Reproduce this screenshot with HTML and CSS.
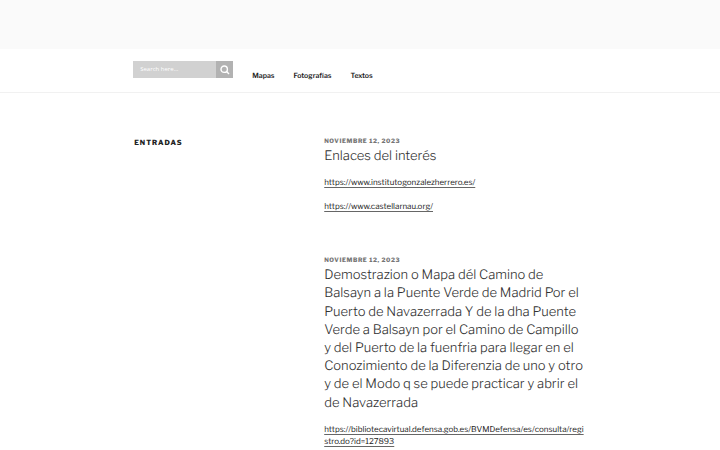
FILE: index.html
```html
<!DOCTYPE html>
<html lang="es">
<head>
<meta charset="utf-8">
<title>Entradas</title>
<meta name="viewport" content="width=device-width, initial-scale=1">
<link rel="stylesheet" href="styles.css">
</head>
<body>
<header class="banner"></header>
<nav class="navigation">
  <div class="wrap nav-row">
    <form class="search" role="search">
      <input class="search-input" type="search" aria-label="Search" placeholder="Search here...">
      <button class="search-button" type="button" aria-label="Search">
        <svg class="search-icon" viewBox="0 0 10 10"><circle cx="4.2" cy="4.2" r="3.2"/><path d="M6.6 6.6 9 9"/></svg>
      </button>
    </form>
    <ul class="menu">
      <li><a href="#mapas">Mapas</a></li>
      <li><a href="#fotografias">Fotografías</a></li>
      <li><a href="#textos">Textos</a></li>
    </ul>
  </div>
</nav>
<div class="wrap content">
  <h2 class="page-title">Entradas</h2>
  <main class="posts">
    <article class="post">
      <time class="date" datetime="2023-11-12">noviembre 12, 2023</time>
      <h3 class="title">Enlaces del interés</h3>
      <p><a href="https://www.institutogonzalezherrero.es/">https://www.institutogonzalezherrero.es/</a></p>
      <p><a href="https://www.castellarnau.org/">https://www.castellarnau.org/</a></p>
    </article>
    <article class="post">
      <time class="date" datetime="2023-11-12">noviembre 12, 2023</time>
      <h3 class="title">Demostrazion o Mapa dél Camino de Balsayn a la Puente Verde de Madrid Por el Puerto de Navazerrada Y de la dha Puente Verde a Balsayn por el Camino de Campillo y del Puerto de la fuenfria para llegar en el Conozimiento de la Diferenzia de uno y otro y de el Modo q se puede practicar y abrir el de Navazerrada</h3>
      <p><a href="https://bibliotecavirtual.defensa.gob.es/BVMDefensa/es/consulta/registro.do?id=127893">https://bibliotecavirtual.defensa.gob.es/BVMDefensa/es/consulta/registro.do?id=127893</a></p>
    </article>
  </main>
</div>
</body>
</html>
```
FILE: styles.css
```css
* { box-sizing: border-box; }
body {
  margin: 0;
  background: #fff;
  color: #333;
  font: 8px/12px "Libre Franklin", "Open Sans", sans-serif;
  text-rendering: geometricPrecision;
}
a { color: #222; }
.banner { height: 49px; background: #fafafa; }
.navigation { border-bottom: 1px solid #f1f1f1; }
.wrap { width: 63%; margin: 0 auto; }
.nav-row { display: flex; align-items: flex-start; padding: 12px 0 10px; }
.search { display: flex; width: 100px; height: 17px; }
.search-input {
  flex: 1; min-width: 0; padding: 0 7px; border: 0; border-radius: 0;
  background: #d1d1d1; color: #fff; font: 6px/17px "Open Sans", sans-serif;
  appearance: none;
}
.search-input::placeholder { color: #fff; opacity: 1; }
.search-button {
  display: grid; place-items: center; width: 17px; padding: 0; border: 0; background: #b2b2b2;
}
.search-icon { width: 10px; height: 10px; fill: none; stroke: #fff; stroke-width: 1.4; }
.menu { display: flex; gap: 19px; margin: 8px 0 0 19px; padding: 0; list-style: none; }
.menu a { font-size: 7px; font-weight: 600; text-decoration: none; }
.content { display: grid; grid-template-columns: 190px 1fr; padding: 44px 2px 0 1px; }
.page-title { margin: 0; color: #222; font-size: 7px; line-height: 12px; font-weight: 800; letter-spacing: 1px; text-transform: uppercase; }
.post { margin-bottom: 44px; }
.post:last-child { margin-bottom: 0; }
.post:last-child p { margin-bottom: 0; }
.date { display: block; color: #767676; font-size: 6px; line-height: 10px; font-weight: 800; letter-spacing: 0.1em; text-transform: uppercase; }
.title { margin: 0 0 11px; font-size: 13px; line-height: 1.4; font-weight: 300; }
.post p { margin: 0 0 12px; word-break: break-all; }
.post a { text-decoration-color: #666; text-underline-offset: 2px; text-decoration-skip-ink: none; }
```
